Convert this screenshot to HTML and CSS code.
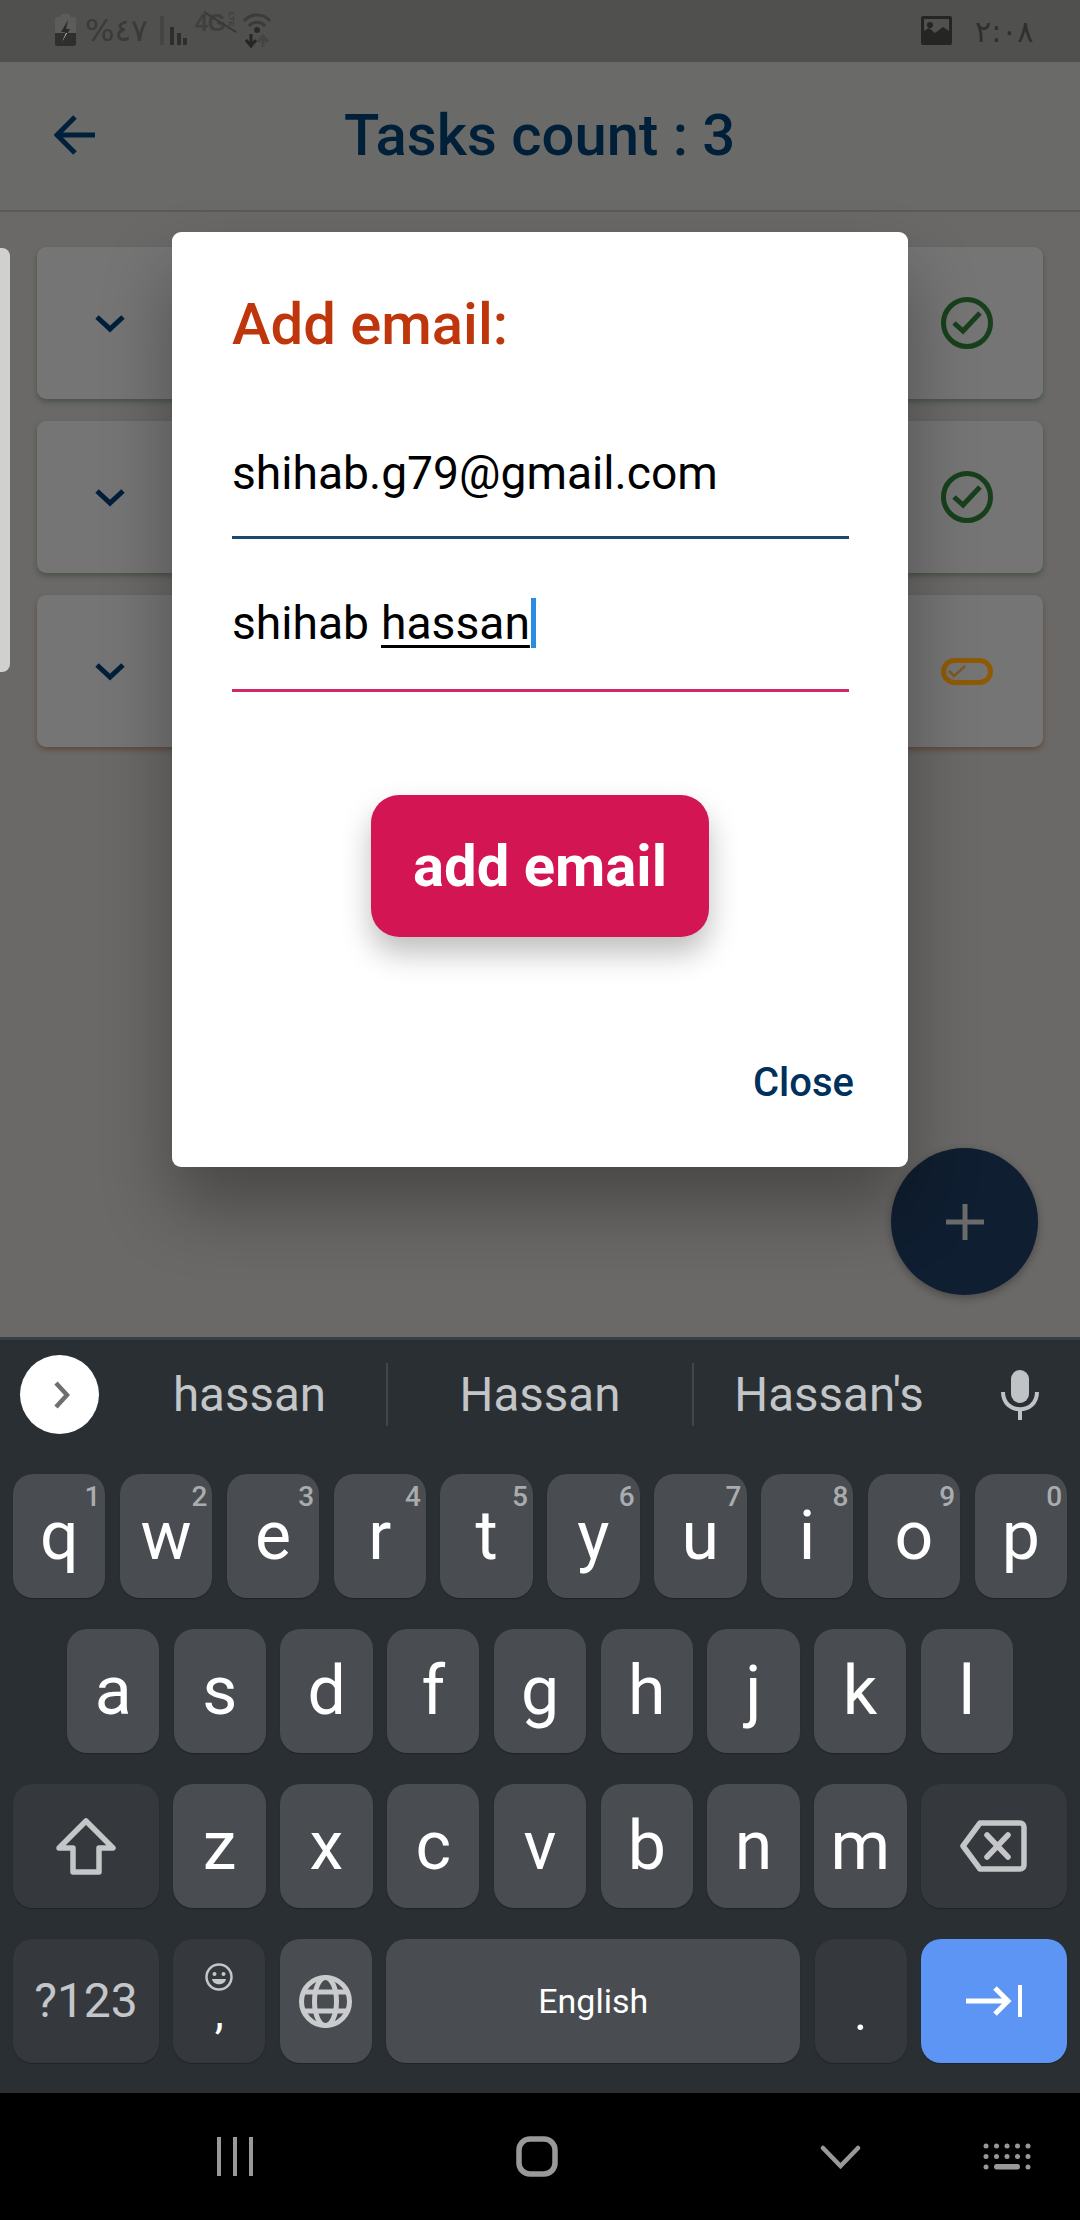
FILE: index.html
```html
<!DOCTYPE html>
<html lang="en">
<head>
<meta charset="utf-8">
<title>Tasks count</title>
<link rel="stylesheet" href="styles.css">
</head>
<body>
<div class="phone">
  <header class="status">
    <div class="status-left">
      <svg class="i-batt" viewBox="0 0 21 32"><rect x="6" y="0" width="9" height="4" fill="#5c5c5a"/><rect x="0" y="3" width="21" height="29" rx="2" fill="#5c5c5a"/><path d="M0 19H21V30a2 2 0 0 1-2 2H2a2 2 0 0 1-2-2Z" fill="#2f2f2e"/><path d="M13 6L6 18H10L7 28L15 15H11Z" fill="#2a2a29"/><path d="M11 19L7 28L12 19Z" fill="#e8e8e8"/></svg>
      <span class="pct">%<bdi>٤٧</bdi></span>
      <svg class="i-sig" viewBox="0 0 27 29"><rect x="0" y="0" width="4" height="29" fill="#454543"/><rect x="10" y="11" width="4" height="18" fill="#2e2e2c"/><rect x="17" y="17" width="4" height="12" fill="#2e2e2c"/><rect x="23" y="22" width="4" height="7" fill="#2e2e2c"/></svg>
      <span class="net">4G<small>LTE</small></span>
      <svg class="i-wifi" viewBox="0 0 28 36"><path d="M1 9C8 1 20 1 27 9" fill="none" stroke="#3b3b39" stroke-width="3"/><path d="M6 14C10 9 18 9 22 14" fill="none" stroke="#3b3b39" stroke-width="3"/><circle cx="14" cy="18" r="3" fill="#2a2a29"/><path d="M8 22V33M3 28L8 34L13 28" fill="none" stroke="#262625" stroke-width="3"/><path d="M20 35V25M15 30L20 24L25 30" fill="none" stroke="#454543" stroke-width="3"/></svg>
    </div>
    <div class="status-right">
      <svg class="i-img" viewBox="0 0 31 29"><path d="M2 0H29a2 2 0 0 1 2 2V27a2 2 0 0 1-2 2H2a2 2 0 0 1-2-2V2a2 2 0 0 1 2-2ZM3 3V15L8 12L14 17L22 11L28 15V3Z" fill="#252523" fill-rule="evenodd"/><circle cx="9" cy="9" r="3" fill="#252523"/></svg>
      <span class="time"><bdi>٢</bdi>:<bdi>٠٨</bdi></span>
    </div>
  </header>

  <div class="appbar">
    <svg class="i-back" viewBox="0 0 42 40"><path d="M41 20H3M21 2L3 20L21 38" fill="none" stroke="#00213b" stroke-width="5"/></svg>
    <h1 class="title">Tasks count : 3</h1>
  </div>

  <main class="content">
    <aside class="drawer"></aside>
    <div class="cards">
      <article class="card card-done">
        <svg class="i-chev" viewBox="0 0 30 19"><path d="M2 3L15 15L28 3" fill="none" stroke="#001f38" stroke-width="5"/></svg>
        <svg class="i-check" viewBox="0 0 52 52"><circle cx="26" cy="26" r="23.5" fill="none" stroke="#18401c" stroke-width="5"/><path d="M13 26L22 34L39 16" fill="none" stroke="#18401c" stroke-width="5"/></svg>
      </article>
      <article class="card card-done">
        <svg class="i-chev" viewBox="0 0 30 19"><path d="M2 3L15 15L28 3" fill="none" stroke="#001f38" stroke-width="5"/></svg>
        <svg class="i-check" viewBox="0 0 52 52"><circle cx="26" cy="26" r="23.5" fill="none" stroke="#18401c" stroke-width="5"/><path d="M13 26L22 34L39 16" fill="none" stroke="#18401c" stroke-width="5"/></svg>
      </article>
      <article class="card card-pending">
        <svg class="i-chev" viewBox="0 0 30 19"><path d="M2 3L15 15L28 3" fill="none" stroke="#001f38" stroke-width="5"/></svg>
        <svg class="i-pill" viewBox="0 0 52 27"><rect x="2.5" y="2.5" width="47" height="22" rx="11" fill="none" stroke="#8f5a06" stroke-width="5"/><path d="M8 13L13 18L24 8" fill="none" stroke="#7d5a22" stroke-width="2.5"/></svg>
      </article>
    </div>

    <button class="fab" type="button" aria-label="Add"><svg class="i-plus" viewBox="0 0 38 36"><path d="M19 0V36M0 18H38" stroke="#6b6b6b" stroke-width="5"/></svg></button>

    <section class="dialog">
      <h2 class="dialog-title">Add email:</h2>
      <div class="field field-email">shihab.g79@gmail.com</div>
      <div class="field field-name">shihab <u class="composing">hassan</u><span class="caret"></span></div>
      <button class="primary" type="button">add email</button>
      <div class="dialog-actions"><span class="close">Close</span></div>
    </section>
  </main>

  <section class="keyboard">
    <div class="suggest">
      <span class="toggle"><svg class="i-tog" viewBox="0 0 17 30"><path d="M3 3L14 15L3 27" fill="none" stroke="#6d6f71" stroke-width="4.5"/></svg></span>
      <span class="sug sug-1">hassan</span>
      <span class="sug-div"></span>
      <span class="sug sug-2">Hassan</span>
      <span class="sug-div"></span>
      <span class="sug sug-3">Hassan's</span>
      <svg class="i-mic" viewBox="0 0 38 50"><rect x="10" y="0" width="18" height="33" rx="9" fill="#c0c3c6"/><path d="M2 22C2 45 36 45 36 22" fill="none" stroke="#c0c3c6" stroke-width="4"/><path d="M19 38V50" stroke="#c0c3c6" stroke-width="4"/></svg>
    </div>
    <div class="rows">
      <div class="row">
        <div class="key"><sup class="num">1</sup>q</div>
        <div class="key"><sup class="num">2</sup>w</div>
        <div class="key"><sup class="num">3</sup>e</div>
        <div class="key"><sup class="num">4</sup>r</div>
        <div class="key"><sup class="num">5</sup>t</div>
        <div class="key"><sup class="num">6</sup>y</div>
        <div class="key"><sup class="num">7</sup>u</div>
        <div class="key"><sup class="num">8</sup>i</div>
        <div class="key"><sup class="num">9</sup>o</div>
        <div class="key"><sup class="num">0</sup>p</div>
      </div>
      <div class="row row-mid">
        <div class="key">a</div><div class="key">s</div><div class="key">d</div><div class="key">f</div><div class="key">g</div><div class="key">h</div><div class="key">j</div><div class="key">k</div><div class="key">l</div>
      </div>
      <div class="row">
        <div class="key key-fn key-wide"><svg class="i-shift" viewBox="0 0 60 57"><path d="M30 3L57 30H43V54H17V30H3Z" fill="none" stroke="#c4c6c8" stroke-width="5.5" stroke-linejoin="round"/></svg></div>
        <div class="key">z</div><div class="key">x</div><div class="key">c</div><div class="key">v</div><div class="key">b</div><div class="key">n</div><div class="key">m</div>
        <div class="key key-fn key-wide"><svg class="i-del" viewBox="0 0 67 52"><path d="M20 3H60a4 4 0 0 1 4 4V45a4 4 0 0 1-4 4H20L3 26Z" fill="none" stroke="#c4c6c8" stroke-width="5.5" stroke-linejoin="round"/><path d="M27 15L48 37M48 15L27 37" stroke="#c4c6c8" stroke-width="5.5" stroke-linecap="round"/></svg></div>
      </div>
      <div class="row">
        <div class="key key-fn key-wide key-sym">?123</div>
        <div class="key key-fn key-comma"><svg class="i-emoji" viewBox="0 0 28 28"><circle cx="14" cy="14" r="12.5" fill="none" stroke="#c4c6c8" stroke-width="2.5"/><circle cx="9.500" cy="11" r="2" fill="#c4c6c8"/><circle cx="18.500" cy="11" r="2" fill="#c4c6c8"/><path d="M7 16H21C20 23 8 23 7 16Z" fill="#c4c6c8"/></svg><span class="comma">,</span></div>
        <div class="key"><svg class="i-globe" viewBox="0 0 53 53"><g fill="none" stroke="#c9cbcd" stroke-width="5"><circle cx="26.500" cy="26.500" r="24"/><ellipse cx="26.500" cy="26.500" rx="11" ry="24"/><path d="M4 17H49M4 36H49"/></g></svg></div>
        <div class="key key-space">English</div>
        <div class="key key-fn key-period">.</div>
        <div class="key key-enter key-wide"><svg class="i-enter" viewBox="0 0 57 32"><path d="M0 16H42M29 3L42 16L29 29" fill="none" stroke="#fff" stroke-width="5"/><path d="M54 0V32" stroke="#fff" stroke-width="4"/></svg></div>
      </div>
    </div>
  </section>

  <nav class="navbar">
    <svg class="i-recents" viewBox="0 0 36 39"><path d="M2 0V39M18 0V39M34 0V39" stroke="#999" stroke-width="4"/></svg>
    <svg class="i-home" viewBox="0 0 42 41"><rect x="3" y="3" width="36" height="35" rx="11" fill="none" stroke="#999" stroke-width="5.500"/></svg>
    <svg class="i-down" viewBox="0 0 41 24"><path d="M3 3L20.500 21L38 3" fill="none" stroke="#999" stroke-width="4.500" stroke-linecap="round"/></svg>
    <svg class="i-kbd" viewBox="0 0 48 27" fill="#999"><circle cx="3" cy="3" r="2.500"/><circle cx="13.500" cy="3" r="2.500"/><circle cx="24" cy="3" r="2.500"/><circle cx="34.500" cy="3" r="2.500"/><circle cx="45" cy="3" r="2.500"/><circle cx="3" cy="13.500" r="2.500"/><circle cx="13.500" cy="13.500" r="2.500"/><circle cx="24" cy="13.500" r="2.500"/><circle cx="34.500" cy="13.500" r="2.500"/><circle cx="45" cy="13.500" r="2.500"/><circle cx="3" cy="24" r="2.500"/><rect x="11" y="21" width="26" height="5.500" rx="2.700"/><circle cx="45" cy="24" r="2.500"/></svg>
  </nav>
</div>
</body>
</html>
```

FILE: styles.css
```css
* { box-sizing: border-box; }
html, body { margin: 0; padding: 0; background: #000; }
body { font-family: Roboto, "Liberation Sans", sans-serif; }
svg { display: block; flex: none; }

.phone { width: 1080px; height: 2220px; display: flex; flex-direction: column; overflow: hidden; }

/* status bar */
.status { height: 62px; flex: none; background: #50504e; display: flex; justify-content: space-between; padding: 0 55px; font-family: "DejaVu Sans", sans-serif; }
.status-left { display: flex; align-items: flex-start; padding-top: 12px; }
.status-right { display: flex; align-items: flex-start; padding-top: 16px; }
.i-batt { width: 21px; height: 32px; margin-top: 2px; }
.pct { width: 62px; margin-left: 9px; font-size: 31px; line-height: 36px; color: #3a3a38; direction: ltr; white-space: nowrap; letter-spacing: 2px; }
.i-sig { width: 27px; height: 29px; margin-left: 13px; margin-top: 4px; }
.net { position: relative; width: 39px; height: 22px; margin-left: 8px; font-family: "Liberation Sans", sans-serif; font-size: 23px; font-weight: 700; line-height: 22px; color: #3f3f3d; display: flex; white-space: nowrap; }
.net small { font-size: 8px; line-height: 9px; writing-mode: vertical-rl; margin-left: 1px; }
.net::after { content: ""; position: absolute; left: 6px; top: 9px; width: 38px; height: 2px; background: #3a3a38; transform: rotate(32deg); }
.i-wifi { width: 28px; height: 36px; margin-left: 9px; }
.i-img { width: 31px; height: 29px; }
.time { width: 50px; margin-left: 23px; font-size: 30px; line-height: 32px; color: #2f2f2d; white-space: nowrap; direction: ltr; letter-spacing: -1px; }

/* app bar */
.appbar { height: 150px; flex: none; background: #6a6a68; border-bottom: 2px solid #5a5a58; display: flex; align-items: center; position: relative; padding: 0 0 2px 54px; }
.i-back { width: 42px; height: 40px; }
.title { margin: 0; width: 390px; margin-left: 248px; white-space: nowrap; text-align: center; font-size: 58px; font-weight: 500; line-height: 64px; color: #001f38; }

/* content behind dialog */
.content { position: relative; flex: 1; background: #6a6967; display: flex; align-items: flex-start; padding: 35px 37px 0 0; }
.drawer { width: 10px; height: 424px; flex: none; background: #d0d0ce; border-radius: 0 8px 8px 0; margin: 1px 27px 0 0; }
.cards { flex: 1; display: flex; flex-direction: column; gap: 22px; }
.card { height: 152px; background: #757575; border-radius: 9px; display: flex; align-items: center; justify-content: space-between; padding: 0 50px 0 58px; }
.card-done { box-shadow: 0 3px 5px rgba(50, 65, 50, .55); }
.card-pending { box-shadow: 0 3px 5px rgba(90, 55, 40, .6); }
.i-chev { width: 30px; height: 19px; }
.i-check { width: 52px; height: 52px; }
.i-pill { width: 52px; height: 27px; }
.fab { position: absolute; left: 891px; top: 936px; width: 147px; height: 147px; padding: 0; border: 0; border-radius: 50%; background: #0f1e30; display: flex; align-items: center; justify-content: center; box-shadow: 0 3px 8px rgba(0, 0, 0, .3); }
.i-plus { width: 38px; height: 36px; }

/* dialog */
.dialog { position: absolute; left: 172px; top: 20px; width: 736px; height: 935px; background: #fff; border-radius: 9px; padding: 60px 59px 0 60px; box-shadow: 0 40px 70px rgba(0, 0, 0, .32); display: flex; flex-direction: column; }
.dialog-title { margin: 0; font-size: 58px; font-weight: 500; line-height: 64px; color: #bf360c; }
.field { font-size: 46.200px; line-height: 64px; color: #000; white-space: nowrap; }
.field-email { margin-top: 85px; padding-bottom: 31px; border-bottom: 3px solid #1c4a6e; }
.field-name { margin-top: 52px; padding-bottom: 34px; border-bottom: 3px solid #cf2a68; display: flex; }
.composing { margin-left: 12px; text-underline-offset: 6px; text-decoration-thickness: 3px; }
.caret { width: 5px; height: 50px; margin: 7px 0 0 1px; background: #2b8be0; }
.primary { align-self: center; margin: 103px 0 0 -1px; width: 338px; height: 142px; padding: 0; border: 0; border-radius: 28px; background: #d31554; color: #fff; font-family: inherit; font-size: 58px; font-weight: 700; box-shadow: 0 16px 30px rgba(0, 0, 0, .26); }
.dialog-actions { display: flex; justify-content: flex-end; margin: 121px -5px 0 0; }
.close { font-size: 40px; font-weight: 500; line-height: 50px; color: #00315c; }

/* keyboard */
.keyboard { height: 756px; flex: none; background: #2a2f33; border-top: 3px solid #3a3f44; display: flex; flex-direction: column; }
.suggest { height: 134px; flex: none; position: relative; display: flex; align-items: center; padding: 0 0 25px 20px; }
.toggle { width: 79px; height: 79px; border-radius: 50%; background: #fff; display: flex; align-items: center; justify-content: center; }
.i-tog { width: 17px; height: 30px; margin-left: 3px; }
.sug { font-size: 47.500px; line-height: 60px; color: #c3c6c9; text-align: center; white-space: nowrap; flex: none; }
.sug-1 { width: 287px; padding-left: 14px; }
.sug-2 { width: 304px; }
.sug-3 { width: 270px; }
.sug-div { width: 2px; height: 63px; flex: none; background: #41464a; }
.i-mic { width: 38px; height: 50px; margin-left: 37px; }

.rows { display: flex; flex-direction: column; gap: 31px; padding: 0 13px; }
.row { display: flex; gap: 14.400px; height: 124px; }
.row-mid { padding: 0 54px; }
.key { position: relative; flex: 1 1 0; min-width: 0; background: #494c50; border-radius: 20px; box-shadow: 0 1px 1px #202326; color: #fff; font-size: 68px; line-height: 124px; text-align: center; display: flex; align-items: center; justify-content: center; }
.num { position: absolute; right: 5px; top: 9px; font-size: 28px; font-weight: 500; line-height: 28px; color: #a9acaf; }
.key-fn { background: #35393d; }
.key-wide { flex: none; width: 146px; }
.key-sym { font-size: 48px; color: #c4c6c9; }
.key-comma { flex-direction: column; justify-content: flex-start; padding-top: 24px; }
.comma { font-size: 46px; line-height: 50px; margin-top: -4px; }
.key-space { flex: none; width: 414px; font-size: 34px; }
.key-period { font-size: 50px; line-height: 50px; padding-top: 24px; }
.key-enter { background: #5d95f5; }
.i-shift { width: 60px; height: 57px; }
.i-del { width: 67px; height: 52px; }
.i-emoji { width: 28px; height: 28px; }
.i-globe { width: 53px; height: 53px; }
.i-enter { width: 57px; height: 32px; }

/* nav bar */
.navbar { height: 127px; flex: none; background: #000; display: flex; align-items: center; padding-left: 217px; }
.i-recents { width: 36px; height: 39px; }
.i-home { width: 42px; height: 41px; margin-left: 263px; }
.i-down { width: 41px; height: 24px; margin-left: 262px; }
.i-kbd { width: 48px; height: 27px; margin-left: 122px; }
```
